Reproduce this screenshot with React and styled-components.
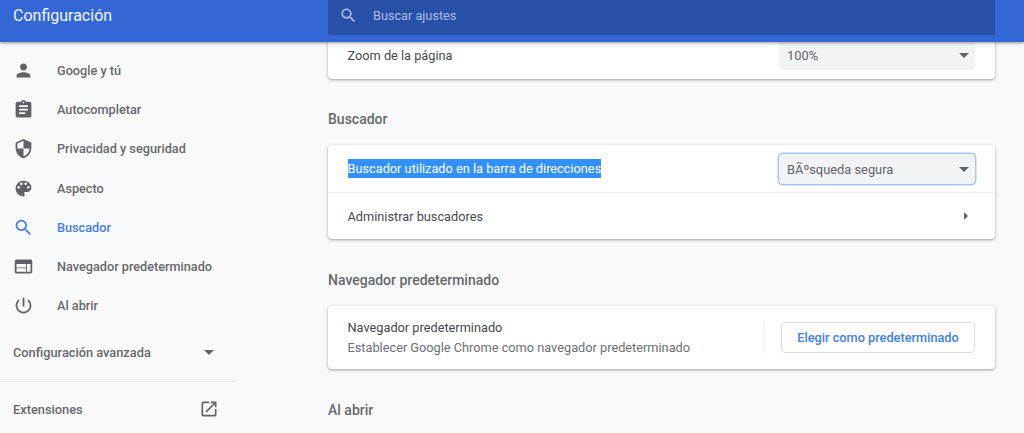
import React from 'react';
import styled, { createGlobalStyle } from 'styled-components';

const Global = createGlobalStyle`
  html, body { margin: 0; padding: 0; height: 100%; overflow: hidden; background: #f8f9fa; }
  body { font-family: Roboto, "Liberation Sans", sans-serif; color: #3c4043; -webkit-font-smoothing: antialiased; }
`;

const Page = styled.div`
  width: 1024px;
  height: 433px;
  display: flex;
  flex-direction: column;
  overflow: hidden;
  background: #f8f9fa;
`;
const Header = styled.header`
  position: relative;
  z-index: 2;
  flex: 0 0 42px;
  height: 42px;
  background: #3367d6;
  box-shadow: 0 1px 3px rgba(60, 64, 67, 0.55);
  display: flex;
  align-items: flex-start;
`;
const Title = styled.h1`
  margin: 0;
  width: 328px;
  padding: 5px 0 0 13px;
  box-sizing: border-box;
  font-size: 16px;
  line-height: 21px;
  font-weight: 400;
  color: #f4f7fd;
`;
const SearchBox = styled.div`
  width: 667px;
  height: 35px;
  box-sizing: border-box;
  padding: 0 0 5px 11px;
  background: #2850a7;
  border-radius: 0 0 2px 2px;
  display: flex;
  align-items: center;
  gap: 15px;
  color: #a9bde8;
  font-size: 12.7px;
`;
const Body = styled.div`
  flex: 1;
  display: flex;
  min-height: 0;
`;
const Side = styled.nav`
  width: 328px;
  flex: 0 0 328px;
  padding-top: 8.5px;
`;
const NavItem = styled.div`
  height: 39.3px;
  width: 235px;
  display: flex;
  align-items: center;
  padding-left: 13px;
  box-sizing: border-box;
  gap: 23px;
  font-size: 12.7px;
  font-weight: 500;
  color: ${(p) => (p.$active ? '#4a7de8' : '#66696e')};
  svg { fill: ${(p) => (p.$active ? '#4a7de8' : '#5f6368')}; flex: none; }
`;
const Advanced = styled.div`
  width: 235px;
  box-sizing: border-box;
  margin-top: 7px;
  height: 40px;
  padding: 0 21px 0 13px;
  display: flex;
  align-items: center;
  justify-content: space-between;
  font-size: 12.8px;
  font-weight: 500;
  color: #66696e;
`;
const SideDivider = styled.div`
  width: 235px;
  height: 1px;
  margin-top: 8.5px;
  background: #e8eaed;
`;
const Extensions = styled(Advanced)`
  margin-top: 7px;
  padding-right: 16px;
  svg { fill: #5f6368; }
`;
const Caret = styled.span`
  width: 0;
  height: 0;
  border-left: 5px solid transparent;
  border-right: 5px solid transparent;
  border-top: 5px solid #5f6368;
`;
const Main = styled.main`
  width: 667px;
  margin-top: -11px;
  display: flex;
  flex-direction: column;
`;
const Card = styled.section`
  flex: none;
  background: #fff;
  border-radius: 4px;
  box-shadow: 0 1px 2px rgba(60, 64, 67, 0.3), 0 1px 3px 1px rgba(60, 64, 67, 0.15);
`;
const SectionTitle = styled.h2`
  flex: none;
  margin: 0;
  height: ${(p) => p.$h || 66}px;
  padding-top: ${(p) => p.$top || 32}px;
  box-sizing: border-box;
  font-size: 14px;
  line-height: 17px;
  font-weight: 500;
  color: #66696e;
`;
const Row = styled.div`
  height: ${(p) => p.$h || 48}px;
  box-sizing: border-box;
  padding: 0 20px 0 19.5px;
  display: flex;
  align-items: center;
  justify-content: space-between;
  font-size: 12.75px;
  color: #46494c;
  & + & { border-top: 1px solid #f0f1f2; }
`;
const Highlighted = styled.span`
  background: #3390ff;
  color: #fff;
  line-height: 19.5px;
`;
const Select = styled.div`
  width: 196px;
  height: 30px;
  box-sizing: border-box;
  padding: 0 6px 0 8px;
  border-radius: 4px;
  background: #f1f3f4;
  display: flex;
  align-items: center;
  justify-content: space-between;
  font-size: 12.85px;
  color: #5f6368;
  ${(p) => p.$focused && `box-shadow: 0 0 0 1.5px #a5c8fa; margin-top: 1px;`}
`;
const Arrow = styled.span`
  width: 0;
  height: 0;
  margin-right: 7px;
  border-top: 4.5px solid transparent;
  border-bottom: 4.5px solid transparent;
  border-left: 4.5px solid #5f6368;
`;
const TwoLine = styled.div`
  display: flex;
  flex-direction: column;
  gap: 1px;
  flex: 1;
  line-height: 19px;
`;
const Secondary = styled.div`
  color: #6b6f74;
`;
const VLine = styled.div`
  width: 1px;
  height: 32px;
  background: #eceef0;
  margin-right: 16px;
`;
const Button = styled.button`
  width: 194px;
  height: 31px;
  padding: 0;
  background: #fff;
  border: 1px solid #dadce0;
  border-radius: 4px;
  font: 500 12.75px Roboto, sans-serif;
  color: #3f7fea;
`;

const I = ({ d, size = 21 }) => (
  <svg width={size} height={size} viewBox="0 0 24 24" aria-hidden="true"><path d={d} /></svg>
);
const icons = {
  person: 'M12 12c2.21 0 4-1.79 4-4s-1.79-4-4-4-4 1.79-4 4 1.79 4 4 4zm0 2c-2.67 0-8 1.34-8 4v2h16v-2c0-2.66-5.33-4-8-4z',
  assign: 'M19 3h-4.18C14.4 1.84 13.3 1 12 1c-1.3 0-2.4.84-2.82 2H5c-1.1 0-2 .9-2 2v14c0 1.1.9 2 2 2h14c1.1 0 2-.9 2-2V5c0-1.1-.9-2-2-2zm-7 0c.55 0 1 .45 1 1s-.45 1-1 1-1-.45-1-1 .45-1 1-1zm2 14H7v-2h7v2zm3-4H7v-2h10v2zm0-4H7V7h10v2z',
  shield: 'M12 1L3 5v6c0 5.55 3.84 10.74 9 12 5.16-1.26 9-6.45 9-12V5l-9-4zm0 10.99h7c-.53 4.12-3.28 7.79-7 8.94V12H5V6.3l7-3.11v8.8z',
  palette: 'M12 3c-4.97 0-9 4.03-9 9s4.03 9 9 9c.83 0 1.5-.67 1.5-1.5 0-.39-.15-.74-.39-1.01-.23-.26-.38-.61-.38-.99 0-.83.67-1.5 1.5-1.5H16c2.76 0 5-2.24 5-5 0-4.42-4.03-8-9-8zm-5.5 9c-.83 0-1.5-.67-1.5-1.5S5.67 9 6.5 9 8 9.67 8 10.5 7.33 12 6.5 12zm3-4C8.67 8 8 7.33 8 6.5S8.67 5 9.5 5s1.5.67 1.5 1.5S10.33 8 9.5 8zm5 0c-.83 0-1.5-.67-1.5-1.5S13.67 5 14.5 5s1.5.67 1.5 1.5S15.33 8 14.5 8zm3 4c-.83 0-1.5-.67-1.5-1.5S16.67 9 17.5 9s1.5.67 1.5 1.5-.67 1.5-1.5 1.5z',
  search: 'M15.5 14h-.79l-.28-.27C15.41 12.59 16 11.11 16 9.5 16 5.91 13.09 3 9.5 3S3 5.91 3 9.5 5.91 16 9.5 16c1.61 0 3.09-.59 4.23-1.57l.27.28v.79l5 4.99L20.49 19l-4.99-5zm-6 0C7.01 14 5 11.99 5 9.5S7.01 5 9.5 5 14 7.01 14 9.5 11.99 14 9.5 14z',
  web: 'M20 4H4c-1.1 0-1.99.9-1.99 2L2 18c0 1.1.9 2 2 2h16c1.1 0 2-.9 2-2V6c0-1.1-.9-2-2-2zm-5 14H4v-4h11v4zm0-5H4V9h11v4zm5 5h-4V9h4v9z',
  power: 'M13 3h-2v10h2V3zm4.83 2.17l-1.42 1.42C17.99 7.86 19 9.81 19 12c0 3.87-3.13 7-7 7s-7-3.13-7-7c0-2.19 1.01-4.14 2.58-5.42L6.17 5.17C4.23 6.82 3 9.26 3 12c0 4.97 4.03 9 9 9s9-4.03 9-9c0-2.74-1.23-5.18-3.17-6.83z',
  open: 'M19 19H5V5h7V3H5c-1.11 0-2 .9-2 2v14c0 1.1.89 2 2 2h14c1.1 0 2-.9 2-2v-7h-2v7zM14 3v2h3.59l-9.83 9.83 1.41 1.41L19 6.41V10h2V3h-7z',
};
const SearchIcon = styled.span`
  display: flex;
  svg { fill: #a9bde8; }
`;
const nav = [
  ['person', 'Google y tú'],
  ['assign', 'Autocompletar'],
  ['shield', 'Privacidad y seguridad'],
  ['palette', 'Aspecto'],
  ['search', 'Buscador', true],
  ['web', 'Navegador predeterminado'],
  ['power', 'Al abrir'],
];

export default function App() {
  return (
    <Page>
      <Global />
      <Header>
        <Title>Configuración</Title>
        <SearchBox>
          <SearchIcon><I d={icons.search} size={19} /></SearchIcon>
          Buscar ajustes
        </SearchBox>
      </Header>
      <Body>
        <Side>
          {nav.map(([ic, label, active]) => (
            <NavItem key={label} $active={active}><I d={icons[ic]} />{label}</NavItem>
          ))}
          <Advanced>Configuración avanzada<Caret /></Advanced>
          <SideDivider />
          <Extensions>Extensiones<I d={icons.open} size={20} /></Extensions>
        </Side>
        <Main>
          <Card>
            <Row>Zoom de la página<Select>100%<Caret /></Select></Row>
          </Card>
          <SectionTitle>Buscador</SectionTitle>
          <Card>
            <Row $h={47}><Highlighted>Buscador utilizado en la barra de direcciones</Highlighted><Select $focused>BÃºsqueda segura<Caret /></Select></Row>
            <Row $h={47}>Administrar buscadores<Arrow /></Row>
          </Card>
          <SectionTitle $h={67} $top={33}>Navegador predeterminado</SectionTitle>
          <Card>
            <Row $h={63}>
              <TwoLine>
                <div>Navegador predeterminado</div>
                <Secondary>Establecer Google Chrome como navegador predeterminado</Secondary>
              </TwoLine>
              <VLine />
              <Button>Elegir como predeterminado</Button>
            </Row>
          </Card>
          <SectionTitle $top={33}>Al abrir</SectionTitle>
        </Main>
      </Body>
    </Page>
  );
}
